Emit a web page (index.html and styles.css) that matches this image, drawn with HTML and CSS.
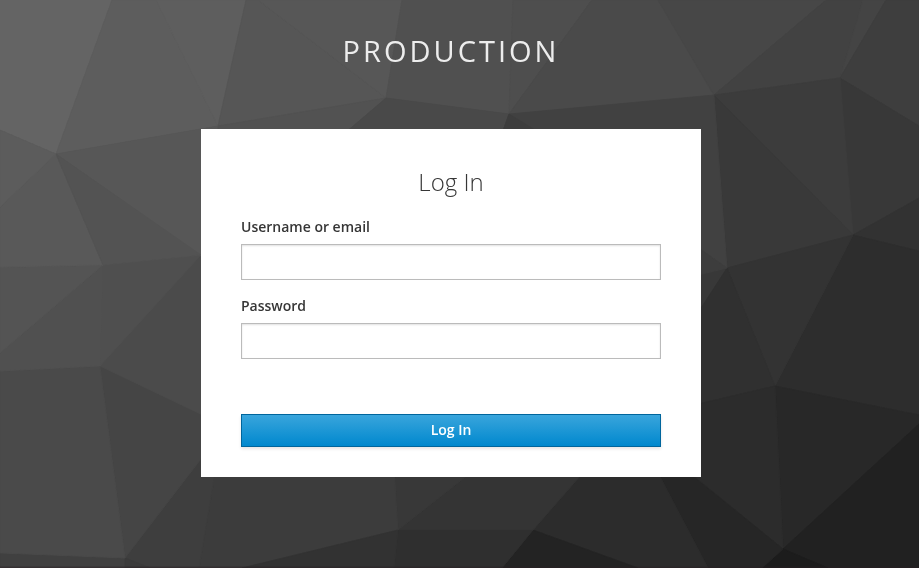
FILE: index.html
```html
<!DOCTYPE html>
<html lang="en">
<head>
<meta charset="utf-8">
<title>Log In</title>
<link rel="stylesheet" href="styles.css">
</head>
<body>
<svg class="backdrop" viewBox="0 0 919 568" preserveAspectRatio="none" aria-hidden="true">
<rect width="919" height="568" fill="#414141"/>
<g class="facets">
<path color="#646464" d="M0 0H112L56 154L0 130z"/>
<path color="#5d5d5d" d="M112 0H156L218 126L56 154z"/>
<path color="#5e5e5e" d="M156 0H246L218 126z"/>
<path color="#565656" d="M246 0H258L386 98L218 126z"/>
<path color="#575757" d="M258 0H402L386 98z"/>
<path color="#505050" d="M402 0H513L509 114L386 98z"/>
<path color="#4e4e4e" d="M513 0H592L509 114z"/>
<path color="#4a4a4a" d="M592 0H658L714 96L509 114z"/>
<path color="#474747" d="M658 0H826L714 95z"/>
<path color="#424242" d="M826 0H863L840 78L714 95z"/>
<path color="#444444" d="M863 0H886L840 78z"/>
<path color="#3e3e3e" d="M886 0H919V126L840 78z"/>
<path color="#383838" d="M840 78L919 126V198L853 235z"/>
<path color="#3c3c3c" d="M714 95L840 78L853 235z"/>
<path color="#393939" d="M714 95L853 235L727 268z"/>
<path color="#323232" d="M853 235L919 198V251z"/>
<path color="#2d2d2d" d="M853 235L919 251V415L775 386z"/>
<path color="#333333" d="M853 235L775 386L727 268z"/>
<path color="#383838" d="M690 277L727 268L690 325z"/>
<path color="#303030" d="M727 268L775 386L690 406V325z"/>
<path color="#282828" d="M775 386L919 415V424L783 549z"/>
<path color="#2c2c2c" d="M775 386L783 549L690 473V406z"/>
<path color="#212121" d="M783 549L919 424V568H828z"/>
<path color="#1c1c1c" d="M783 549L828 568H762z"/>
<path color="#262626" d="M655 467L682 467L783 549L762 568H708z"/>
<path color="#2c2c2c" d="M588 467H655L708 568H638L533 530z"/>
<path color="#232323" d="M533 530L638 568H502z"/>
<path color="#2f2f2f" d="M398 530H533L502 568H394z"/>
<path color="#343434" d="M478 467H588L533 530H398z"/>
<path color="#383838" d="M394 467H478L398 530z"/>
<path color="#3c3c3c" d="M216 467H394L398 530L242 568H199z"/>
<path color="#323232" d="M398 530L394 568H242z"/>
<path color="#3e3e3e" d="M125 558L211 446L216 467L199 568H150z"/>
<path color="#404040" d="M0 553L125 558V568H0z"/>
<path color="#3b3b3b" d="M125 558L150 568H125z"/>
<path color="#454545" d="M100 366L211 419V446L125 558z"/>
<path color="#4a4a4a" d="M0 371L100 366L125 558L0 553z"/>
<path color="#4b4b4b" d="M201 255H211V419L100 366z"/>
<path color="#4f4f4f" d="M103 265L201 255L100 366z"/>
<path color="#505050" d="M0 353L103 265L100 366L0 371z"/>
<path color="#545454" d="M0 267L103 265L0 353z"/>
<path color="#595959" d="M56 154L103 265L0 267V207z"/>
<path color="#5c5c5c" d="M0 130L56 154L0 207z"/>
<path color="#575757" d="M56 154L218 126V256H201z"/>
<path color="#535353" d="M56 154L201 255L103 265z"/>
<path color="#525252" d="M218 126L386 98L338 139H218z"/>
<path color="#494949" d="M386 98L509 114L500 139H338z"/>
<path color="#414141" d="M509 114L714 95L727 268L690 242V139H500z"/>
<path color="#3d3d3d" d="M509 114L550 139H500z"/>
<path color="#3d3d3d" d="M690 242L727 268L690 277z"/>
</g>
<rect y="566.5" width="919" height="1.5" fill="#2b2024" opacity=".45"/>
</svg>
<div class="page">
<header class="realm">Production</header>
<main class="card">
<h1>Log In</h1>
<form>
<label for="username">Username or email</label>
<input id="username" type="text">
<label for="password">Password</label>
<input id="password" type="password">
<button type="button">Log In</button>
</form>
</main>
</div>
</body>
</html>
```
FILE: styles.css
```css
* { box-sizing: border-box; }
body {
  margin: 0;
  height: 568px;
  overflow: hidden;
  background: #393939;
  color: #363636;
  font: 14px/23px "Open Sans", sans-serif;
}
.backdrop {
  position: fixed;
  inset: 0;
  width: 100%;
  height: 100%;
  z-index: -1;
}
/* A thin stroke in the facet's own colour closes the seams. */
.facets path {
  fill: currentColor;
  stroke: currentColor;
  stroke-width: .8;
  stroke-linejoin: round;
}
.page {
  width: 902px;
  display: flex;
  flex-direction: column;
  align-items: center;
}
.realm {
  height: 129px;
  padding: 32px 0 0;
  color: #ededed;
  font-size: 29px;
  line-height: 38px;
  letter-spacing: 3px;
  text-transform: uppercase;
}
.card {
  width: 500px;
  height: 348px;
  padding: 37px 40px 0;
  background: #fff;
}
h1 {
  margin: 0 0 18px;
  font-size: 24px;
  line-height: 31px;
  font-weight: 300;
  text-align: center;
}
form { display: flex; flex-direction: column; }
label { font-weight: 600; margin-bottom: 6px; }
input {
  height: 36px;
  margin: 0 0 14px;
  padding: 3px 6px;
  border: 1px solid #bbb;
  background: #fff;
  box-shadow: inset 0 1px 2px rgba(3, 3, 3, .12);
  font: inherit;
}
button {
  height: 33px;
  margin-top: 41px;
  padding: 0 0 2px;
  border: 1px solid #00659c;
  background: linear-gradient(#39a5dc, #0088ce);
  box-shadow: 0 2px 3px rgba(3, 3, 3, .1);
  color: #fff;
  font: 600 14px/23px "Open Sans", sans-serif;
}
```
